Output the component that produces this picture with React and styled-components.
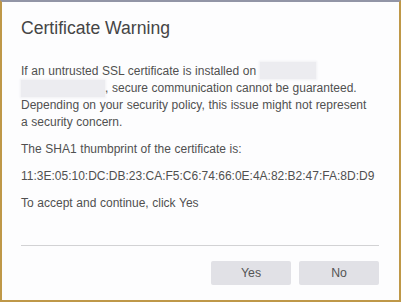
import React from "react";
import styled, { createGlobalStyle } from "styled-components";

const Global = createGlobalStyle`
  html, body { margin: 0; padding: 0; background: #ffffff; }
  body { font-family: "Liberation Sans", Arial, sans-serif; }
  * { box-sizing: border-box; }
`;

const Dialog = styled.div`
  width: 401px;
  height: 302px;
  background: #fdfdfe;
  border: 2px solid #bf9848;
  border-top-color: #9295a6;
  padding: 15px 20px 15px 19px;
  display: flex;
  flex-direction: column;
  overflow: hidden;
`;

const Title = styled.h1`
  margin: 0;
  font-size: 17.6px;
  line-height: 22px;
  font-weight: normal;
  color: #454545;
`;

const Body = styled.div`
  margin-top: 24px;
  font-size: 12px;
  line-height: 17px;
  color: #505050;
  word-spacing: 0.3px;
`;

const Para = styled.p`
  margin: 0;
  & + & { margin-top: ${(p) => p.$gap ?? 10}px; }
`;

const Redacted = styled.span`
  display: inline-block;
  vertical-align: top;
  width: ${(p) => p.$w}px;
  height: 17px;
  margin-top: ${(p) => p.$dy ?? 0}px;
  background: #ececf0;
  box-shadow: 0 0 2px 1px #f1f1f4;
`;

const Divider = styled.hr`
  margin: auto 0 0 0;
  border: none;
  border-top: 1px solid #d2d2d4;
  height: 0;
`;

const Footer = styled.div`
  display: flex;
  justify-content: flex-end;
  gap: 8px;
  margin-top: 15px;
`;

const Button = styled.button`
  width: 80px;
  height: 24px;
  border: none;
  border-radius: 2px;
  background: #e1e1e6;
  color: #555;
  font-family: "Liberation Sans", Arial, sans-serif;
  font-size: 12.3px;
  padding: 0;
  cursor: pointer;
`;

export default function App() {
  return (
    <>
      <Global />
      <Dialog>
        <Title>Certificate Warning</Title>
        <Body>
          <Para>
            If an untrusted SSL certificate is installed on{" "}
            <Redacted $w={56} $dy={-1} />
            <br />
            <Redacted $w={84} />, secure communication cannot be guaranteed.
            <br />
            Depending on your security policy, this issue might not represent
            <br />
            a security concern.
          </Para>
          <Para $gap={10}>The SHA1 thumbprint of the certificate is:</Para>
          <Para $gap={10}>
            11:3E:05:10:DC:DB:23:CA:F5:C6:74:66:0E:4A:82:B2:47:FA:8D:D9
          </Para>
          <Para $gap={10}>To accept and continue, click Yes</Para>
        </Body>
        <Divider />
        <Footer>
          <Button>Yes</Button>
          <Button>No</Button>
        </Footer>
      </Dialog>
    </>
  );
}
